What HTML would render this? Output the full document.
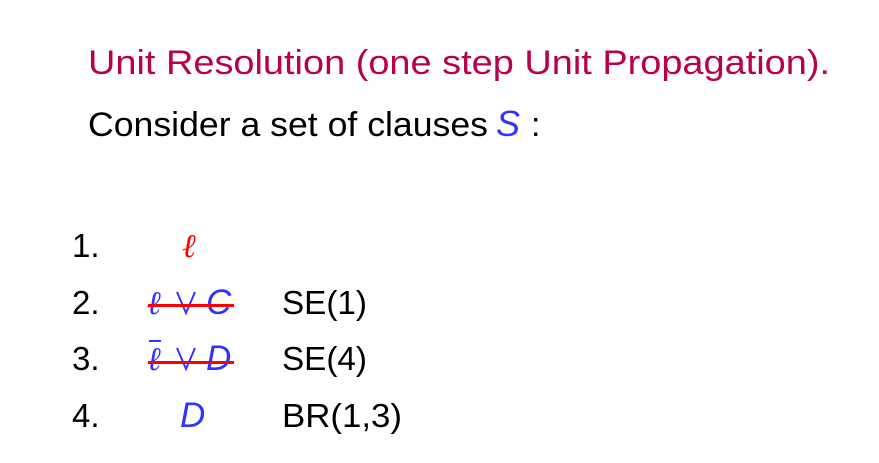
<!DOCTYPE html>
<html><head><meta charset="utf-8"><style>
html,body{margin:0;padding:0;background:#fff;}
svg{display:block;}
text{font-family:"Liberation Sans",sans-serif;font-size:33px;}
.m{font-family:"Liberation Serif",serif;font-style:italic;}
</style></head><body>
<svg width="879" height="463" viewBox="0 0 879 463">
<text x="88" y="74" fill="#b8004c" textLength="742" lengthAdjust="spacingAndGlyphs" style="font-size:34px">Unit Resolution (one step Unit Propagation).</text>
<text x="88" y="136" fill="#000" textLength="400" lengthAdjust="spacingAndGlyphs" style="font-size:34px">Consider a set of clauses</text>
<text x="496" y="136" fill="#3333ff" style="font-style:italic;font-size:36px">S</text>
<text x="531" y="136" fill="#000" style="font-size:34px">:</text>

<text x="72" y="257" fill="#000">1.</text>
<text x="72" y="314" fill="#000">2.</text>
<text x="72" y="370" fill="#000">3.</text>
<text x="72" y="427" fill="#000">4.</text>

<text x="182" y="257" fill="#ff0000" class="m">ℓ</text>

<text x="147" y="314" fill="#3333ff" class="m">ℓ</text>
<polyline points="177,292 186,313 195,292" fill="none" stroke="#3333ff" stroke-width="2"/>
<text x="206" y="314" fill="#3333ff" style="font-style:italic;font-size:35px">C</text>
<rect x="148" y="304" width="86" height="3" fill="#ff0000"/>

<rect x="149" y="340" width="12" height="2" fill="#3333ff"/>
<text x="147" y="370" fill="#3333ff" class="m">ℓ</text>
<polyline points="177,348 186,369 195,348" fill="none" stroke="#3333ff" stroke-width="2"/>
<text x="206" y="370" fill="#3333ff" style="font-style:italic;font-size:35px">D</text>
<rect x="148" y="361" width="86" height="3" fill="#ff0000"/>

<text x="180" y="427" fill="#3333ff" style="font-style:italic;font-size:35px">D</text>

<text x="282" y="314" fill="#000" textLength="85" lengthAdjust="spacingAndGlyphs">SE(1)</text>
<text x="282" y="370" fill="#000" textLength="85" lengthAdjust="spacingAndGlyphs">SE(4)</text>
<text x="282" y="427" fill="#000" textLength="120" lengthAdjust="spacingAndGlyphs">BR(1,3)</text>
</svg>
</body></html>
